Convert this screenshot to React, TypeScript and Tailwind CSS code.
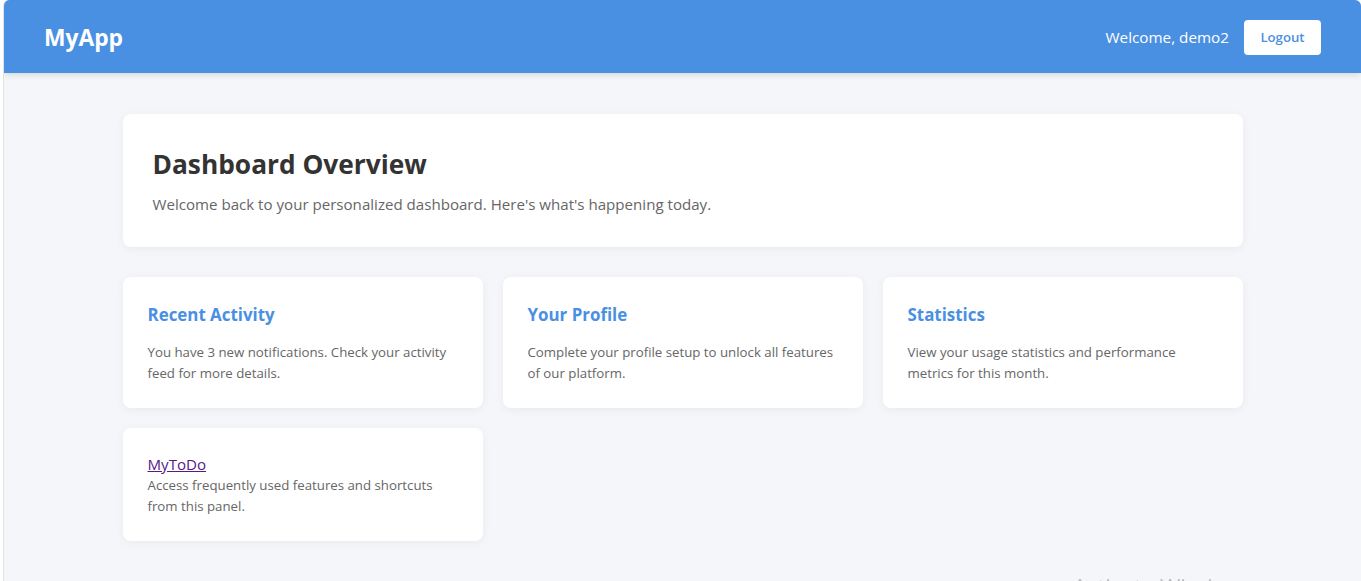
import React from "react";

const cards = [
  {
    title: "Recent Activity",
    text: "You have 3 new notifications. Check your activity feed for more details.",
  },
  {
    title: "Your Profile",
    text: "Complete your profile setup to unlock all features of our platform.",
  },
  {
    title: "Statistics",
    text: "View your usage statistics and performance metrics for this month.",
  },
];

export default function App() {
  return (
    <div
      className="min-h-screen bg-white pl-[3px]"
      style={{ fontFamily: '"Open Sans", "Noto Sans", sans-serif' }}
    >
      <div className="min-h-screen border-l border-[#e3e3e6] bg-[#f5f6fa] rounded-t-[6px] overflow-hidden">
        {/* header */}
        <header className="h-[73px] bg-[#4a90e2] px-10 pt-[2px] flex items-center justify-between shadow-[0_2px_6px_rgba(0,0,0,0.12)]">
          <h1 className="text-[22.8px] font-bold text-white mt-[2px]">MyApp</h1>
          <div className="flex items-center gap-[15px]">
            <span className="text-white text-[15.25px]">Welcome, demo2</span>
            <button className="bg-white text-[#4a90e2] text-[13.2px] font-semibold rounded-[4px] w-[77px] h-[35px]">
              Logout
            </button>
          </div>
        </header>

        <main className="max-w-[1120px] mx-auto pt-[41px]">
          <div className="bg-white rounded-[8px] shadow-[0_2px_10px_rgba(0,0,0,0.05)] px-[30px] pt-[31px] h-[133px]">
            <h2 className="text-[26.3px] font-bold text-[#333] leading-[38px]">Dashboard Overview</h2>
            <p className="text-[15.1px] text-[#666] mt-[10px]">
              Welcome back to your personalized dashboard. Here's what's happening today.
            </p>
          </div>

          <div className="grid grid-cols-3 gap-5 mt-[30px]">
            {cards.map((c) => (
              <div
                key={c.title}
                className="bg-white rounded-[8px] shadow-[0_2px_10px_rgba(0,0,0,0.05)] px-[25px] pt-[24px] h-[131px]"
              >
                <h3 className="text-[16.9px] font-bold text-[#4a90e2] leading-[28px]">{c.title}</h3>
                <p className="text-[13.25px] text-[#666] leading-[21px] mt-[13px]">{c.text}</p>
              </div>
            ))}
            <div className="bg-white rounded-[8px] shadow-[0_2px_10px_rgba(0,0,0,0.05)] px-[25px] pt-[26px] h-[113px]">
              <a href="#" className="block text-[15.1px] text-[#551a8b] underline leading-[20px]">
                MyToDo
              </a>
              <p className="text-[13.25px] text-[#666] leading-[21px] mt-[1px]">
                Access frequently used features and shortcuts from this panel.
              </p>
            </div>
          </div>
        </main>
      </div>
      <div className="fixed left-[1073px] top-[570px] text-[22px] text-[#999]/60 pointer-events-none">
        Activate Windows
      </div>
    </div>
  );
}
